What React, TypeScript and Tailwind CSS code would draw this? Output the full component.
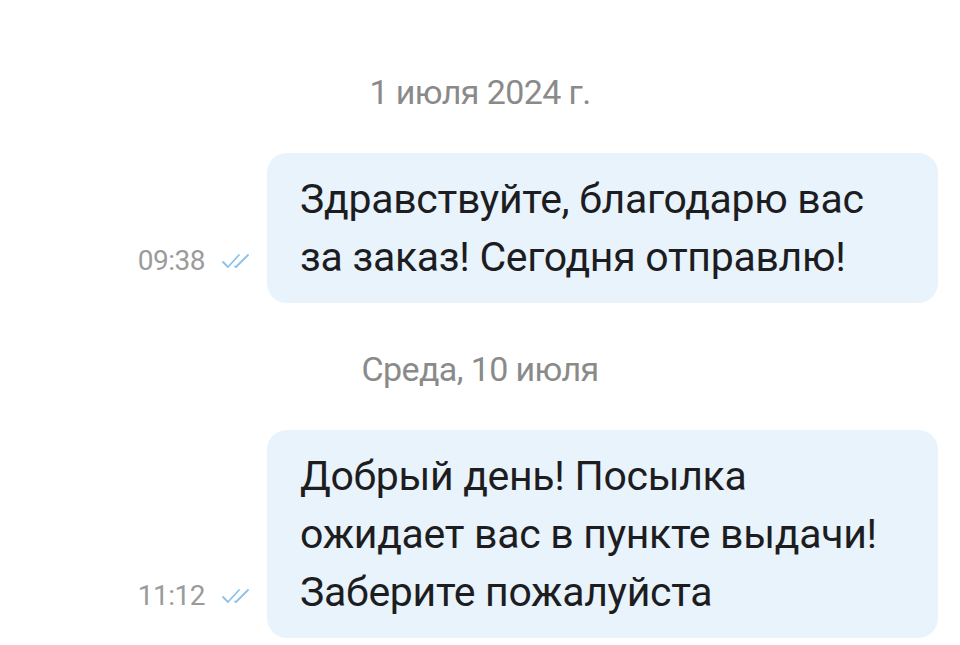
import React from "react";

const CheckDouble = () => (
  <svg width="34" height="18" viewBox="0 0 34 18" fill="none" stroke="#8cc2ea" strokeWidth="1.8" strokeLinecap="round" strokeLinejoin="round">
    <path d="M2 10l5 5L18 3" />
    <path d="M14 14.5l1 0.5L27 3" />
  </svg>
);

const messages = [
  {
    date: "1 июля 2024 г.",
    time: "09:38",
    lines: ["Здравствуйте, благодарю вас", "за заказ! Сегодня отправлю!"],
  },
  {
    date: "Среда, 10 июля",
    time: "11:12",
    lines: ["Добрый день! Посылка", "ожидает вас в пункте выдачи!", "Заберите пожалуйста"],
  },
];

export default function App() {
  return (
    <div className="h-[645px] w-[960px] overflow-hidden bg-white font-['Roboto',sans-serif]">
      <div className="flex flex-col pt-[72px]">
        {messages.map((msg, index) => (
          <div key={index} className={index === 0 ? "flex flex-col" : "mt-[46px] flex flex-col"}>
            {/* Date */}
            <div className="text-center text-[34px] leading-[40px] tracking-[-0.6px] text-[#8a8a8a]">{msg.date}</div>

            {/* Bubble row */}
            <div className="mt-[41px] flex items-end justify-end pr-[22px]">
              <div className="mb-[26px] mr-[12px] flex items-center gap-[16px]">
                <span className="text-[28px] leading-[32px] tracking-[-0.5px] text-[#9b9b9b]">{msg.time}</span>
                <CheckDouble />
              </div>
              <div className="w-[671px] rounded-[20px] bg-[#e8f3fc] px-[33px] py-[17px] text-[41px] leading-[58px] tracking-[-0.3px] text-[#1d1d1f]">
                {msg.lines.map((line, i) => (
                  <div key={i}>{line}</div>
                ))}
              </div>
            </div>
          </div>
        ))}
      </div>
    </div>
  );
}
